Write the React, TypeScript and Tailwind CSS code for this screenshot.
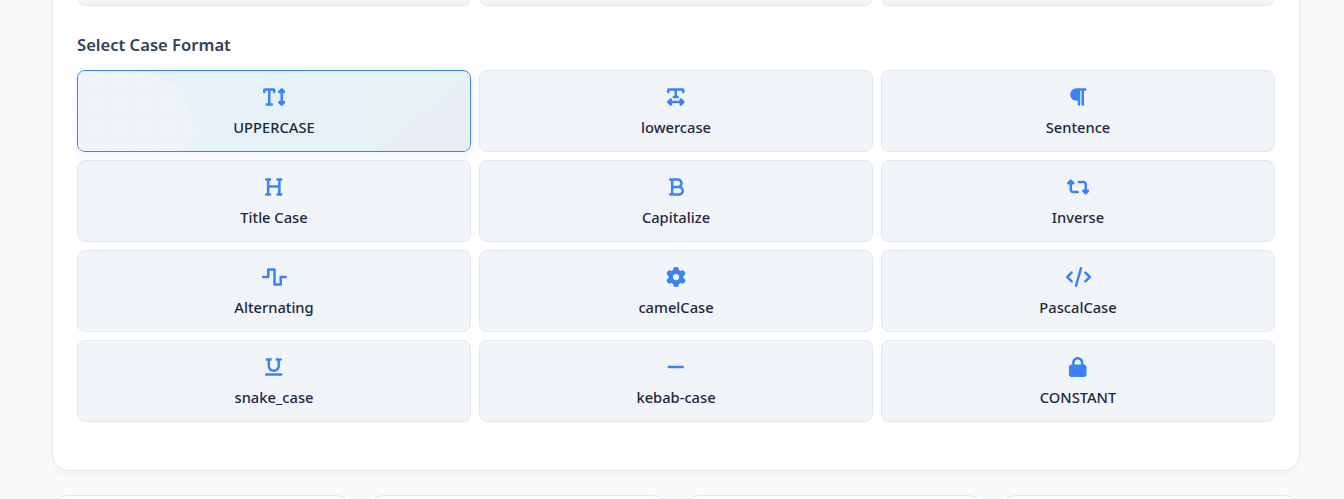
import React from "react";
import {
  FaTextHeight, FaTextWidth, FaParagraph, FaHeading, FaBold, FaRetweet,
  FaWaveSquare, FaGear, FaCode, FaUnderline, FaMinus, FaLock,
} from "react-icons/fa6";

const items = [
  { label: "UPPERCASE", Icon: FaTextHeight, size: "w-[22.5px]", active: true },
  { label: "lowercase", Icon: FaTextWidth, size: "w-[17.5px]" },
  { label: "Sentence", Icon: FaParagraph, size: "w-[17.5px]" },
  { label: "Title Case", Icon: FaHeading, size: "w-[17.5px]" },
  { label: "Capitalize", Icon: FaBold, size: "w-[15px]" },
  { label: "Inverse", Icon: FaRetweet, size: "w-[22.5px]" },
  { label: "Alternating", Icon: FaWaveSquare, size: "w-[25px]" },
  { label: "camelCase", Icon: FaGear, size: "w-[20px]" },
  { label: "PascalCase", Icon: FaCode, size: "w-[25px]" },
  { label: "snake_case", Icon: FaUnderline, size: "w-[17.5px]" },
  { label: "kebab-case", Icon: FaMinus, size: "w-[17.5px]" },
  { label: "CONSTANT", Icon: FaLock, size: "w-[17.5px]" },
];

export default function App() {
  return (
    <div className="h-[499px] overflow-hidden bg-[#f8fafc] pr-[44px] pl-[52px] font-['Noto_Sans',sans-serif]">
      <div className="-mt-[30px] rounded-2xl border border-[#e2e8f0] bg-white px-6 pb-[48px] shadow-[0_4px_12px_rgba(0,0,0,0.03)]">
        <div className="grid h-[35px] grid-cols-3 gap-2">
          <div className="rounded-lg border border-[#e2e8f0] bg-[#f1f5f9]" />
          <div className="rounded-lg border border-[#e2e8f0] bg-[#f1f5f9]" />
          <div className="rounded-lg border border-[#e2e8f0] bg-[#f1f5f9]" />
        </div>
        <h3 className="mt-[27px] mb-[13px] text-[16.6px] leading-6 font-semibold text-[#334155]">Select Case Format</h3>
        <div className="grid grid-cols-3 gap-2">
          {items.map(({ label, Icon, size, active }) => (
            <div
              key={label}
              className={
                active
                  ? "relative flex h-[82px] flex-col items-center overflow-hidden rounded-lg border border-[#3b82f6] bg-gradient-to-r from-[#e7f2fb] via-[#e7f2f8] to-[#e6f2f2] pt-[16px] shadow-[0_4px_12px_rgba(59,130,246,0.1)]"
                  : "relative flex h-[82px] flex-col items-center rounded-lg border border-[#e2e8f0] bg-[#f1f5f9] pt-[16px]"
              }
            >
              {active && (
                <>
                  <div className="absolute top-0 left-0 h-[82px] w-[116px] rounded-[0_70px_40px_0/0_80px_20px_0] bg-[#eef3f8] bg-[radial-gradient(#f7f9fb_0.6px,transparent_0.7px)] bg-[length:3px_3px]" />
                  <div className="absolute right-0 bottom-0 h-[76px] w-[92px] bg-[linear-gradient(to_bottom_right,transparent_50%,#e9eef6_50%)]" />
                </>
              )}
              <Icon className={`relative h-5 ${size} text-[#3b82f6]`} />
              <span className="relative mt-[10px] text-[14.7px] leading-5 font-medium text-[#1e293b]">{label}</span>
            </div>
          ))}
        </div>
      </div>
      <div className="mt-[24px] grid grid-cols-4 gap-4">
        <div className="h-10 rounded-2xl border border-[#e2e8f0] bg-white" />
        <div className="h-10 rounded-2xl border border-[#e2e8f0] bg-white" />
        <div className="h-10 rounded-2xl border border-[#e2e8f0] bg-white" />
        <div className="h-10 rounded-2xl border border-[#e2e8f0] bg-white" />
      </div>
    </div>
  );
}
